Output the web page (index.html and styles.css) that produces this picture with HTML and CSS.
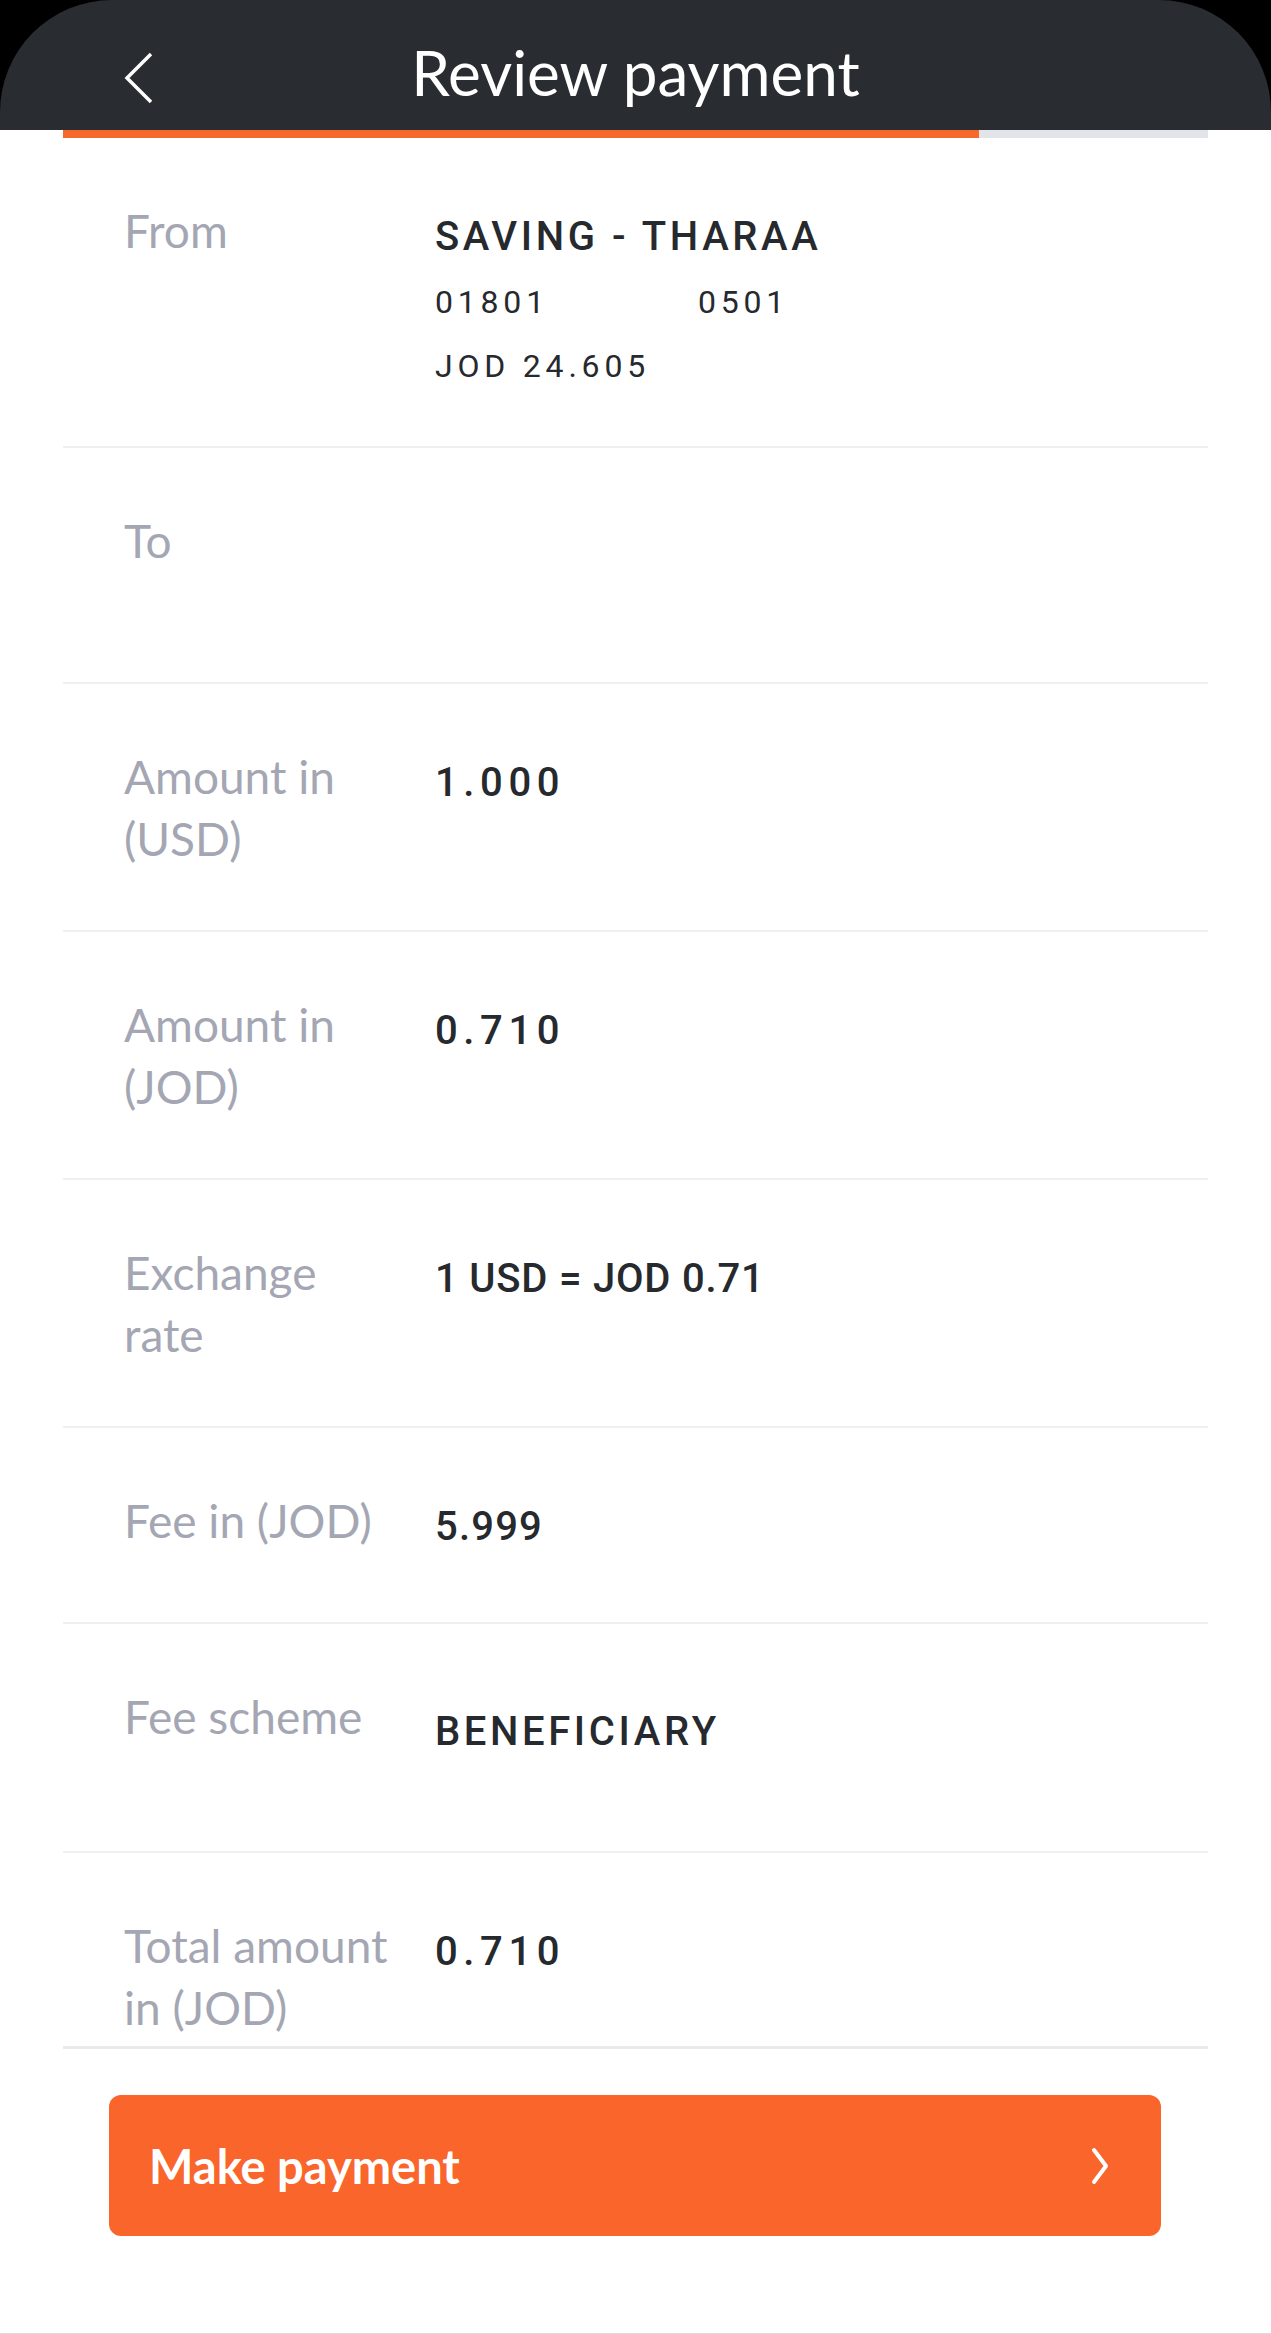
FILE: index.html
```html
<!DOCTYPE html>
<html lang="en">
<head>
  <meta charset="UTF-8">
  <title>Review payment</title>
  <meta name="viewport" content="width=device-width, initial-scale=1.0">
  <link rel="stylesheet" href="styles.css">
</head>
<body>
  <div class="screen">

    <!-- Kopfzeile -->
    <header class="topbar">
      <button class="back-button" aria-label="Back">
        <svg width="30" height="52" viewBox="0 0 30 52"><path d="M27 2 L3 26 L27 50" fill="none" stroke="#fff" stroke-width="3.5"/></svg>
      </button>
      <h1>Review payment</h1>
      <span></span>
    </header>
    <div class="progress"><div class="progress-bar" style="width: 80%"></div></div>

    <!-- Zahlungsdetails -->
    <main class="details">
      <div class="row row-from">
        <div class="label">From</div>
        <div class="value">
          <div class="caps">SAVING - THARAA</div>
          <div class="acct-line"><span class="acct-no">01801</span><span>0501</span></div>
          <div class="acct-line">JOD 24.605</div>
        </div>
      </div>
      <div class="row row-to">
        <div class="label">To</div>
        <div class="value"></div>
      </div>
      <div class="row">
        <div class="label">Amount in (USD)</div>
        <div class="value spaced">1.000</div>
      </div>
      <div class="row">
        <div class="label">Amount in (JOD)</div>
        <div class="value spaced">0.710</div>
      </div>
      <div class="row">
        <div class="label">Exchange rate</div>
        <div class="value rate">1 USD = JOD 0.71</div>
      </div>
      <div class="row row-fee">
        <div class="label">Fee in (JOD)</div>
        <div class="value fee">5.999</div>
      </div>
      <div class="row row-scheme">
        <div class="label">Fee scheme</div>
        <div class="value caps">BENEFICIARY</div>
      </div>
      <div class="row">
        <div class="label">Total amount in (JOD)</div>
        <div class="value spaced">0.710</div>
      </div>
    </main>

    <!-- Bestaetigen -->
    <footer class="actions">
      <button class="pay-button">
        <span>Make payment</span>
        <svg width="18" height="38" viewBox="0 0 18 38"><path d="M3 3 L15 19 L3 35" fill="none" stroke="#fff" stroke-width="4" stroke-linecap="round" stroke-linejoin="round"/></svg>
      </button>
    </footer>
  </div>
</body>
</html>
```

FILE: styles.css
```css
/* Grundlayout */
body {
  margin: 0;
  background: #000;
  font-family: Lato, "Open Sans", sans-serif;
}
.screen {
  height: 2334px;
  display: flex;
  flex-direction: column;
  overflow: hidden;
}

/* Kopfzeile */
.topbar {
  height: 130px;
  flex: none;
  display: grid;
  grid-template-columns: 1fr auto 1fr;
  align-items: center;
  background: #292c31;
  border-radius: 112px 112px 0 0;
}
.back-button {
  justify-self: start;
  margin: 26px 0 0 124px;
  padding: 0;
  background: none;
  border: none;
  display: flex;
  cursor: pointer;
}
.topbar h1 {
  margin: 0;
  padding-top: 14px;
  font-size: 62px;
  font-weight: 400;
  color: #fff;
}

/* Fortschritt */
.progress {
  flex: none;
  height: 8px;
  padding: 0 63px;
  background: linear-gradient(#e2e4e9, #e2e4e9) 63px 0 / 1145px 8px no-repeat, #fff;
}
.progress-bar {
  height: 8px;
  background: #f7692b;
}

/* Details */
.details {
  flex: 1;
  overflow: hidden;
  background: #fff;
  padding: 0 63px;
}
.row {
  display: flex;
  gap: 36px;
  padding: 62px 0 60px 61px;
  border-bottom: 2px solid #f0f0f2;
}
.label {
  width: 275px;
  flex: none;
  font-size: 46px;
  line-height: 62px;
  color: #a4a7b3;
}
.value {
  padding-top: 6px;
  font-family: Roboto, "Liberation Sans", sans-serif;
  font-size: 40px;
  font-weight: 500;
  line-height: 62px;
  color: #26292d;
}
.caps {
  letter-spacing: 0.09em;
}
.spaced {
  letter-spacing: 0.14em;
}
.rate {
  letter-spacing: 0.02em;
}
.fee {
  letter-spacing: 0.03em;
}
.acct-line {
  margin-top: 4px;
  font-size: 32px;
  font-weight: 400;
  line-height: 60px;
  letter-spacing: 0.15em;
}
.acct-no {
  display: inline-block;
  width: 263px;
}
.row-from {
  padding-bottom: 50px;
}
.row-to .value {
  height: 106px;
}
.row-fee {
  padding-bottom: 64px;
}
.row-scheme {
  padding-bottom: 88px;
}
.row-scheme .value {
  padding-top: 15px;
}

/* Button unten */
.actions {
  flex: none;
  background: #fff;
  padding: 0 63px;
  border-bottom: 1px solid #dcdcdf;
}
.actions::before {
  content: "";
  display: block;
  height: 3px;
  background: #eaeaec;
}
.pay-button {
  width: calc(100% - 93px);
  height: 141px;
  margin: 46px 46px 97px;
  padding: 0 52px 0 40px;
  display: flex;
  align-items: center;
  justify-content: space-between;
  background: #f9652a;
  border: none;
  border-radius: 12px;
  font-family: Lato, "Open Sans", sans-serif;
  font-size: 47px;
  font-weight: 700;
  color: #fff;
  cursor: pointer;
}
```
